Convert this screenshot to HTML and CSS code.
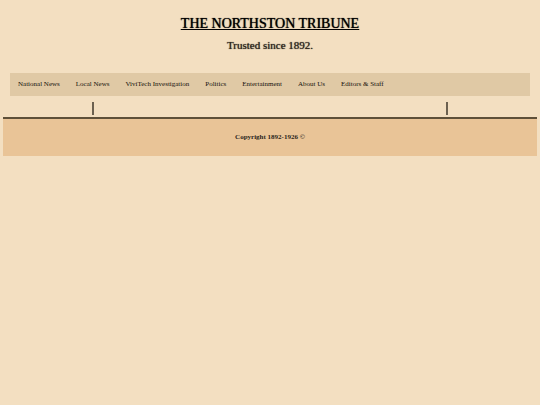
FILE: index.html
```html
<!DOCTYPE html>
<html lang="en">
<head>
  <meta charset="UTF-8">
  <meta name="viewport" content="width=device-width, initial-scale=1.0">
  <title>The Northston Tribune</title>
  <link rel="stylesheet" href="styles.css">
</head>
<body>
  <header class="masthead">
    <h1>THE NORTHSTON TRIBUNE</h1>
    <h2>Trusted since 1892.</h2>
  </header>
  <nav class="navbar">
    <a href="#">National News</a>
    <a href="#">Local News</a>
    <a href="#">ViviTech Investigation</a>
    <a href="#">Politics</a>
    <a href="#">Entertainment</a>
    <a href="#">About Us</a>
    <a href="#">Editors &amp; Staff</a>
  </nav>
  <!-- side columns and the main story column -->
  <main class="columns">
    <div class="side"></div>
    <div class="middle"></div>
    <div class="side"></div>
  </main>
  <footer class="footer">
    <p>Copyright 1892-1926 ©</p>
  </footer>
</body>
</html>
```
FILE: styles.css
```css
body {
  font-family: "Liberation Serif", "Times New Roman", serif;
  background-color: #f3dfc1;
  color: #2a241b;
  margin: 0;
  padding: 0 3px;
}
.masthead {
  text-align: center;
  padding: 15px 0 20px;
}
h1 {
  margin: 0;
  font-size: 14px;
  line-height: 18px;
  font-weight: normal;
  color: #000;
  text-decoration: underline;
  text-shadow: 0 0 1px #000;
}
h2 {
  margin: 4px 0 0;
  font-size: 11px;
  line-height: 16px;
  font-weight: normal;
  text-shadow: 0 0 1px #2a241b;
}
.navbar {
  display: flex;
  flex-wrap: wrap;
  gap: 16px;
  margin: 0 7px;
  padding: 7px 8px;
  background-color: #e0c9a5;
}
.navbar a {
  font-size: 7px;
  line-height: 9px;
  color: #15110c;
  text-decoration: none;
}
.navbar a:hover {
  text-decoration: underline;
}
.columns {
  display: grid;
  grid-template-columns: 1fr 4fr 1fr;
  padding: 6px 0 2px;
}
.middle {
  height: 13px;
  border-left: 2px solid #6c6150;
  border-right: 2px solid #6c6150;
}
.footer {
  padding: 13px 0 14px;
  border-top: 2px solid #5e5039;
  background-color: #e9c497;
  text-align: center;
}
.footer p {
  margin: 0;
  font-size: 7px;
  line-height: 10px;
  font-weight: bold;
}
```
